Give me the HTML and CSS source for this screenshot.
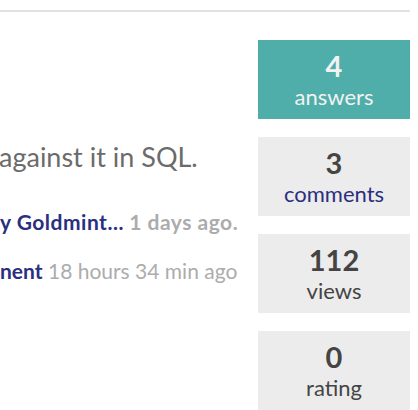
FILE: index.html
```html
<!DOCTYPE html>
<html lang="en">
<head>
  <meta charset="UTF-8">
  <title>Question</title>
  <link rel="stylesheet" href="styles.css">
</head>
<body>
  <div class="page">
    <div class="topbar"></div>
    <div class="question">
      <div class="question-body">
        <p class="excerpt">against it in SQL.</p>
        <p class="meta"><a href="#">y Goldmint...</a> <span class="when">1 days ago.</span></p>
        <p class="meta last"><a href="#">nent</a> <span class="ago">18 hours 34 min ago</span></p>
      </div>
      <div class="stats">
        <div class="stat answered">
          <div class="num">4</div>
          <div class="label">answers</div>
        </div>
        <div class="stat">
          <div class="num">3</div>
          <div class="label link">comments</div>
        </div>
        <div class="stat">
          <div class="num">112</div>
          <div class="label">views</div>
        </div>
        <div class="stat">
          <div class="num">0</div>
          <div class="label">rating</div>
        </div>
      </div>
    </div>
  </div>
</body>
</html>
```

FILE: styles.css
```css
body {
  margin: 0;
  font-family: Lato, "Open Sans", sans-serif;
  background: #fff;
  overflow: hidden;
}
.page {
  width: 410px;
}
.topbar {
  height: 10px;
  border-bottom: 2px solid #e2e2e2;
}
.question {
  display: flex;
}
.question-body {
  flex: 1;
  padding-top: 129px;
}
.excerpt {
  margin: 0 0 0 -1px;
  font-size: 27px;
  color: #6b6b6b;
  line-height: 32px;
}
.meta {
  margin: 37px 0 0;
  font-size: 21px;
  line-height: 24px;
  color: #acacac;
  white-space: nowrap;
}
.meta a {
  color: #2b2f7f;
  font-weight: bold;
  text-decoration: none;
}
.meta .when {
  font-weight: bold;
  letter-spacing: 0.5px;
}
.meta.last {
  margin-top: 25px;
}
.meta.last .ago {
  letter-spacing: 0;
}
.meta:not(.last) a {
  letter-spacing: 0.5px;
}
.stats {
  width: 152px;
  padding-top: 28px;
  display: flex;
  flex-direction: column;
  gap: 18px;
}
.stat {
  box-sizing: border-box;
  height: 79px;
  padding-top: 8px;
  background: #ececec;
  color: #444;
  text-align: center;
}
.stat.answered {
  background: #4fadaa;
  color: #f2f2f2;
}
.num {
  font-size: 29px;
  font-weight: bold;
  line-height: 35px;
}
.label {
  font-size: 22px;
  line-height: 27px;
}
.label.link {
  color: #2b2f7f;
}
```
